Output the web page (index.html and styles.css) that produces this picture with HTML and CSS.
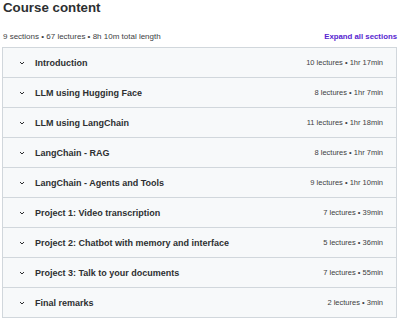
FILE: index.html
```html
<!DOCTYPE html>
<html lang="en">
<head>
    <meta charset="UTF-8">
    <title>Course content</title>
    <link rel="stylesheet" href="styles.css">
</head>
<body>

<div class="course">
    <h2 class="course-title">Course content</h2>
    <div class="course-info">
        <span>9 sections • 67 lectures • 8h 10m total length</span>
        <a href="#" class="expand">Expand all sections</a>
    </div>

    <div class="sections">
        <div class="section">
            <span class="chevron"><svg width="8" height="8" viewBox="0 0 8 8"><path d="M2 3 4 5 6 3" fill="none" stroke="#2d2f31" stroke-width="1"/></svg></span>
            <span class="section-name">Introduction</span>
            <span class="section-meta">10 lectures • 1hr 17min</span>
        </div>
        <div class="section">
            <span class="chevron"><svg width="8" height="8" viewBox="0 0 8 8"><path d="M2 3 4 5 6 3" fill="none" stroke="#2d2f31" stroke-width="1"/></svg></span>
            <span class="section-name">LLM using Hugging Face</span>
            <span class="section-meta">8 lectures • 1hr 7min</span>
        </div>
        <div class="section">
            <span class="chevron"><svg width="8" height="8" viewBox="0 0 8 8"><path d="M2 3 4 5 6 3" fill="none" stroke="#2d2f31" stroke-width="1"/></svg></span>
            <span class="section-name">LLM using LangChain</span>
            <span class="section-meta">11 lectures • 1hr 18min</span>
        </div>
        <div class="section">
            <span class="chevron"><svg width="8" height="8" viewBox="0 0 8 8"><path d="M2 3 4 5 6 3" fill="none" stroke="#2d2f31" stroke-width="1"/></svg></span>
            <span class="section-name">LangChain - RAG</span>
            <span class="section-meta">8 lectures • 1hr 7min</span>
        </div>
        <div class="section">
            <span class="chevron"><svg width="8" height="8" viewBox="0 0 8 8"><path d="M2 3 4 5 6 3" fill="none" stroke="#2d2f31" stroke-width="1"/></svg></span>
            <span class="section-name">LangChain - Agents and Tools</span>
            <span class="section-meta">9 lectures • 1hr 10min</span>
        </div>
        <div class="section">
            <span class="chevron"><svg width="8" height="8" viewBox="0 0 8 8"><path d="M2 3 4 5 6 3" fill="none" stroke="#2d2f31" stroke-width="1"/></svg></span>
            <span class="section-name">Project 1: Video transcription</span>
            <span class="section-meta">7 lectures • 39min</span>
        </div>
        <div class="section">
            <span class="chevron"><svg width="8" height="8" viewBox="0 0 8 8"><path d="M2 3 4 5 6 3" fill="none" stroke="#2d2f31" stroke-width="1"/></svg></span>
            <span class="section-name">Project 2: Chatbot with memory and interface</span>
            <span class="section-meta">5 lectures • 36min</span>
        </div>
        <div class="section">
            <span class="chevron"><svg width="8" height="8" viewBox="0 0 8 8"><path d="M2 3 4 5 6 3" fill="none" stroke="#2d2f31" stroke-width="1"/></svg></span>
            <span class="section-name">Project 3: Talk to your documents</span>
            <span class="section-meta">7 lectures • 55min</span>
        </div>
        <div class="section">
            <span class="chevron"><svg width="8" height="8" viewBox="0 0 8 8"><path d="M2 3 4 5 6 3" fill="none" stroke="#2d2f31" stroke-width="1"/></svg></span>
            <span class="section-name">Final remarks</span>
            <span class="section-meta">2 lectures • 3min</span>
        </div>
    </div>
</div>

</body>
</html>
```

FILE: styles.css
```css
body {
    margin: 0;
    padding: 0;
    background-color: #fff;
    color: #2d2f31; /* Dark text color */
    font-family: "Liberation Sans", Arial, sans-serif;
}
.course {
    padding: 0 3px 0 2px;
}
.course-title {
    margin: 0;
    padding-left: 1px;
    font-size: 13.3px;
    line-height: 16px;
    font-weight: bold;
}
.course-info {
    display: flex;
    justify-content: space-between;
    align-items: center;
    height: 16px;
    margin-top: 12px;
    margin-bottom: 3px;
    font-size: 8px;
    color: #3e4143;
    padding-left: 1px;
}
.expand {
    color: #5624d0; /* Purple link color */
    font-weight: bold;
    text-decoration: none;
    font-size: 7.8px;
}
.sections {
    border: 1px solid #d1d7dc;
}
.section {
    display: flex;
    align-items: center;
    height: 29px;
    background-color: #f7f9fa;
    border-bottom: 1px solid #d1d7dc;
    padding: 0 13px 0 15px;
}
.section:last-child {
    border-bottom: none;
}
.chevron {
    display: flex;
    width: 17px;
}
.section-name {
    flex: 1;
    font-size: 9px;
    font-weight: bold;
}
.section-meta {
    font-size: 7.5px;
    color: #3e4143;
}
```
